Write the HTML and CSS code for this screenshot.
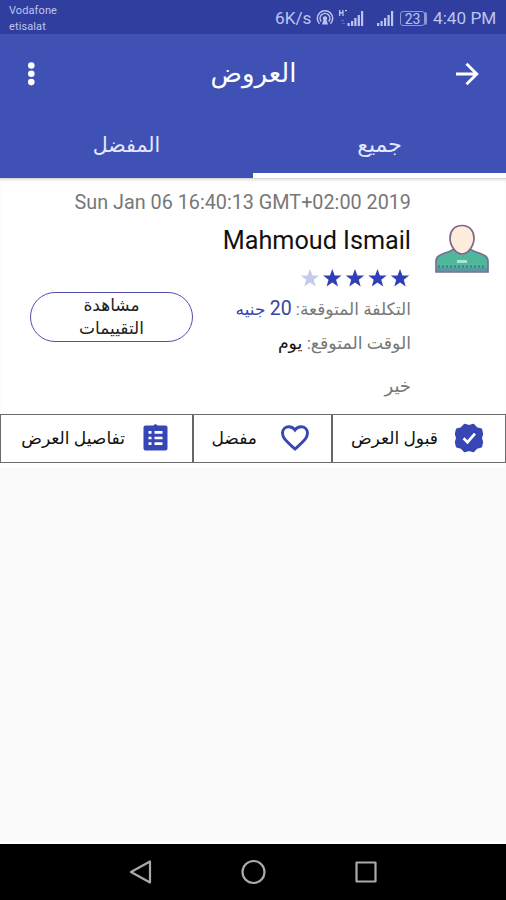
FILE: index.html
```html
<!DOCTYPE html>
<html lang="ar">
<head>
<meta charset="utf-8">
<title>العروض</title>
<link rel="stylesheet" href="styles.css">
</head>
<body>
<div class="status">
  <div class="carriers"><span>Vodafone</span><span>etisalat</span></div>
  <div class="indicators">
    <span class="speed">6K/s</span>
    <svg class="hotspot" width="18" height="18" viewBox="0 0 18 18"><g fill="none" stroke="currentColor" stroke-width="1.500"><path d="M3.500 14.800a7.700 7.700 0 1 1 11 0"/><path d="M5.300 12.500a4.900 4.900 0 1 1 7.400 0"/></g><path d="M9 7.200a2.200 2.200 0 0 1 1.500 3.800l1.500 4.500H6L7.500 11A2.200 2.200 0 0 1 9 7.200z" fill="currentColor"/></svg>
    <svg class="signal-h" width="26" height="18" viewBox="0 0 26 18" fill="currentColor"><path d="M1 1h1.300v2h2V1h1.300v6H4.300V4.500h-2V7H1zM7 1h2v1.200H7zM9.500 14h2.200v3H9.500zM13 12h2.200v5H13zM16.300 9h2.200v8h-2.200zM19.700 6h2.200v11h-2.200zM23 2h2.200v15H23z"/><path d="M3 11h3v1H3zM4 14h3v1H4z" opacity=".35"/></svg>
    <svg class="signal" width="17" height="18" viewBox="0 0 17 18" fill="currentColor"><path d="M0 14h2.200v3H0zM3.500 12h2.200v5H3.500zM7 9h2.200v8H7zM10.500 6h2.200v11h-2.200zM14 2h2.200v15H14z"/></svg>
    <span class="battery">23</span>
    <span class="clock">4:40 PM</span>
  </div>
</div>
<header class="appbar">
  <svg class="more" width="12" height="26" viewBox="0 0 12 26" fill="#fff"><circle cx="6.300" cy="4.500" r="3.300"/><circle cx="6.300" cy="12.800" r="3.300"/><circle cx="6.300" cy="21.100" r="3.300"/></svg>
  <h1 dir="rtl">العروض</h1>
  <svg class="forward" width="26" height="26" viewBox="0 0 26 26" fill="none" stroke="#fff" stroke-width="2.900"><path d="M2 13h21M12.500 2.700 22.800 13 12.500 23.300"/></svg>
</header>
<nav class="tabs">
  <div class="tab" dir="rtl"><span>المفضل</span></div>
  <div class="tab active" dir="rtl"><span>جميع</span></div>
</nav>
<main class="card">
  <section class="offer">
    <div class="rate-col"><button class="reviews" dir="rtl">مشاهدة<br>التقييمات</button></div>
    <div class="info">
      <div class="date">Sun Jan 06 16:40:13 GMT+02:00 2019</div>
      <div class="name">Mahmoud Ismail</div>
      <svg class="stars" width="112" height="22" viewBox="0 0 112 22"><defs><path id="star" d="M0-9.500 2.400-3 9.200-3 3.800 1.300 5.700 8 0 4-5.700 8-3.800 1.300-9.200-3-2.400-3Z"/></defs><g fill="#303fb5"><use href="#star" x="11" y="12.500" opacity=".27"/><use href="#star" x="33.300" y="12.500"/><use href="#star" x="56" y="12.500"/><use href="#star" x="78.500" y="12.500"/><use href="#star" x="101" y="12.500"/></g></svg>
      <div class="line cost" dir="rtl">التكلفة المتوقعة: <b><span class="num">20</span> جنيه</b></div>
      <div class="line time" dir="rtl">الوقت المتوقع: <b>يوم</b></div>
      <div class="line note" dir="rtl">خير</div>
    </div>
    <svg class="avatar" width="56" height="52" viewBox="0 0 56 52"><path d="M2 48V37.500C2 32 7 30.500 11 29c5-2 9-2 10-6h14c1 4 5 4 10 6 4 1.500 9 3 9 8.500V48z" fill="#4fb89c" stroke="#796f90" stroke-width="1.700"/><path d="M3 43.500h50V47H3z" fill="#5c97a3"/><path d="M4 42.500h48" stroke="#397d83" stroke-width="2.200" stroke-dasharray="2 2"/><path d="M23 37.500h10" stroke="#a5e8ce" stroke-width="3"/><path d="M28 1.500c-8 0-12 6-12 12.500 0 8 6 16 12 16s12-8 12-16c0-6.500-4-12.500-12-12.500z" fill="#feecdc" stroke="#80668b" stroke-width="1.700"/></svg>
  </section>
  <section class="actions">
    <div class="action details"><span dir="rtl">تفاصيل العرض</span><svg width="28" height="30" viewBox="0 0 28 30"><path d="M3.500 2.500h8a2.300 2.300 0 0 1 4 0h8a2 2 0 0 1 2 2v21a2 2 0 0 1-2 2h-20a2 2 0 0 1-2-2v-21a2 2 0 0 1 2-2z" fill="#3746b4"/><path d="M6.500 9.300h3M6.500 15h3M6.500 20.700h3M12.500 9.300h8M12.500 15h8M12.500 20.700h8" stroke="#fff" stroke-width="2.700"/></svg></div>
    <div class="action favourite"><span dir="rtl">مفضل</span><svg width="30" height="28" viewBox="0 0 30 28"><path d="M15 25 12 22.300C5.500 16.500 2.500 13.500 2.500 9c0-3.800 2.800-6.300 6.400-6.300 2.400 0 4.700 1.200 6.100 3.200 1.400-2 3.700-3.200 6.100-3.200 3.600 0 6.400 2.500 6.400 6.300 0 4.500-3 7.500-9.500 13.300z" fill="none" stroke="#3746b4" stroke-width="2.900"/></svg></div>
    <div class="action accept"><span dir="rtl">قبول العرض</span><svg width="30" height="30" viewBox="0 0 30 30"><path d="M15 2.800 19.500 1.500 22.800 5 27.400 6.300 28.400 11 27.200 15 28.400 19 27.400 23.700 22.800 25 19.500 28.500 15 27.200 10.500 28.500 7.200 25 2.600 23.700 1.600 19 2.800 15 1.600 11 2.600 6.300 7.200 5 10.500 1.500Z" fill="#3746b4" stroke="#3746b4" stroke-width="1.500" stroke-linejoin="round"/><path d="m9.500 15.200 4 4 7.500-8.500" fill="none" stroke="#fff" stroke-width="2.700"/></svg></div>
  </section>
</main>
<div class="blank"></div>
<footer class="navbar">
  <svg width="24" height="26" viewBox="0 0 24 26"><path d="M3 13 22 2.500v21z"/></svg>
  <svg width="26" height="26" viewBox="0 0 26 26"><circle cx="13.500" cy="13" r="11"/></svg>
  <svg width="24" height="26" viewBox="0 0 24 26"><path d="M2.500 3.500h19v19h-19z"/></svg>
</footer>
</body>
</html>
```
FILE: styles.css
```css
* { box-sizing: border-box; }
body {
  margin: 0;
  width: 506px;
  height: 900px;
  display: flex;
  flex-direction: column;
  overflow: hidden;
  background: #fafafa;
  font-family: Roboto, "DejaVu Sans", sans-serif;
}
svg { display: block; flex: none; }
.status {
  height: 34px;
  display: flex;
  justify-content: space-between;
  background: #303e9f;
  color: #bdc5ee;
}
.carriers {
  display: flex;
  flex-direction: column;
  padding: 3px 0 0 9px;
  font-size: 11px;
  line-height: 15.500px;
  letter-spacing: .1px;
}
.indicators {
  display: flex;
  align-items: center;
  padding: 2px 12px 0 0;
  font-size: 18px;
}
.speed { width: 36px; font-size: 17.200px; }
.hotspot { margin-left: 5px; }
.signal-h { margin-left: 4px; }
.signal { margin-left: 13px; }
.battery {
  width: 25px;
  height: 15px;
  margin: 0 8px 0 6px;
  border: 1px solid #8d98d5;
  border-radius: 3px;
  font-size: 14px;
  line-height: 14px;
  text-align: center;
  box-shadow: 3px 0 0 -1px #8d98d5;
}
.clock { width: 61px; font-size: 17.200px; white-space: nowrap; }
.appbar {
  height: 80px;
  display: flex;
  align-items: center;
  justify-content: space-between;
  padding: 0 26px 0 25px;
  background: #3f51b5;
  color: #fff;
}
.appbar h1 {
  margin: 0 0 3px 16px;
  font-size: 26px;
  font-weight: 400;
  line-height: 40px;
}
.tabs {
  height: 64px;
  display: flex;
  flex: none;
  background: #3f51b5;
  color: #e4e8ff;
  font-size: 20.500px;
}
.tab {
  flex: 1;
  display: flex;
  justify-content: center;
  padding-top: 14px;
  line-height: 34px;
}
.active { border-bottom: 5px solid #fff; font-size: 22px; }
.card {
  height: 290px;
  flex: none;
  background: #fff;
  border-top: 1px solid #d6d3d8;
  box-shadow: inset 0 2px 2px #eee;
}
.offer { height: 235px; display: flex; }
.rate-col { width: 192px; padding: 113px 0 0 30px; flex: none; }
.reviews {
  width: 163px;
  height: 50px;
  padding: 0;
  background: #fff;
  border: 1.500px solid #4e50ac;
  border-radius: 25px;
  color: #222;
  font: 17px/23px "DejaVu Sans", sans-serif;
}
.info {
  width: 219px;
  display: flex;
  flex-direction: column;
  align-items: flex-end;
  white-space: nowrap;
}
.date {
  height: 46px;
  padding-top: 12px;
  color: #777;
  font-size: 19.800px;
  line-height: 24px;
}
.name { height: 41px; color: #111; font-size: 25.200px; line-height: 32px; }
.line { height: 34px; color: #777; font-size: 17px; line-height: 34px; }
.line b { font-weight: 400; }
.cost { margin-top: 4px; }
.cost b { color: #3744a6; }
.num { font-size: 19.500px; }
.time { font-size: 17.300px; }
.time b { color: #111; }
.note { margin-top: 9px; font-size: 18px; }
.avatar { margin: 45px 0 0 23px; }
.actions { height: 49px; display: flex; border: 1px solid #6b6b6b; }
.action {
  display: flex;
  align-items: center;
  justify-content: flex-end;
  padding-bottom: 1px;
  font-size: 17.100px;
  color: #111;
  white-space: nowrap;
}
.details { width: 193px; padding-right: 22px; gap: 17px; border-right: 2px solid #666; }
.favourite { width: 139px; padding-right: 21px; gap: 23px; border-right: 2px solid #666; }
.accept { flex: 1; padding-right: 21px; gap: 16px; }
.blank { flex: 1; border-bottom: 2px solid #fff; }
.navbar {
  height: 56px;
  display: flex;
  justify-content: center;
  align-items: center;
  gap: 88px;
  background: #000;
}
.navbar svg { fill: none; stroke: #aaa; stroke-width: 2.200; stroke-linejoin: round; }
```
